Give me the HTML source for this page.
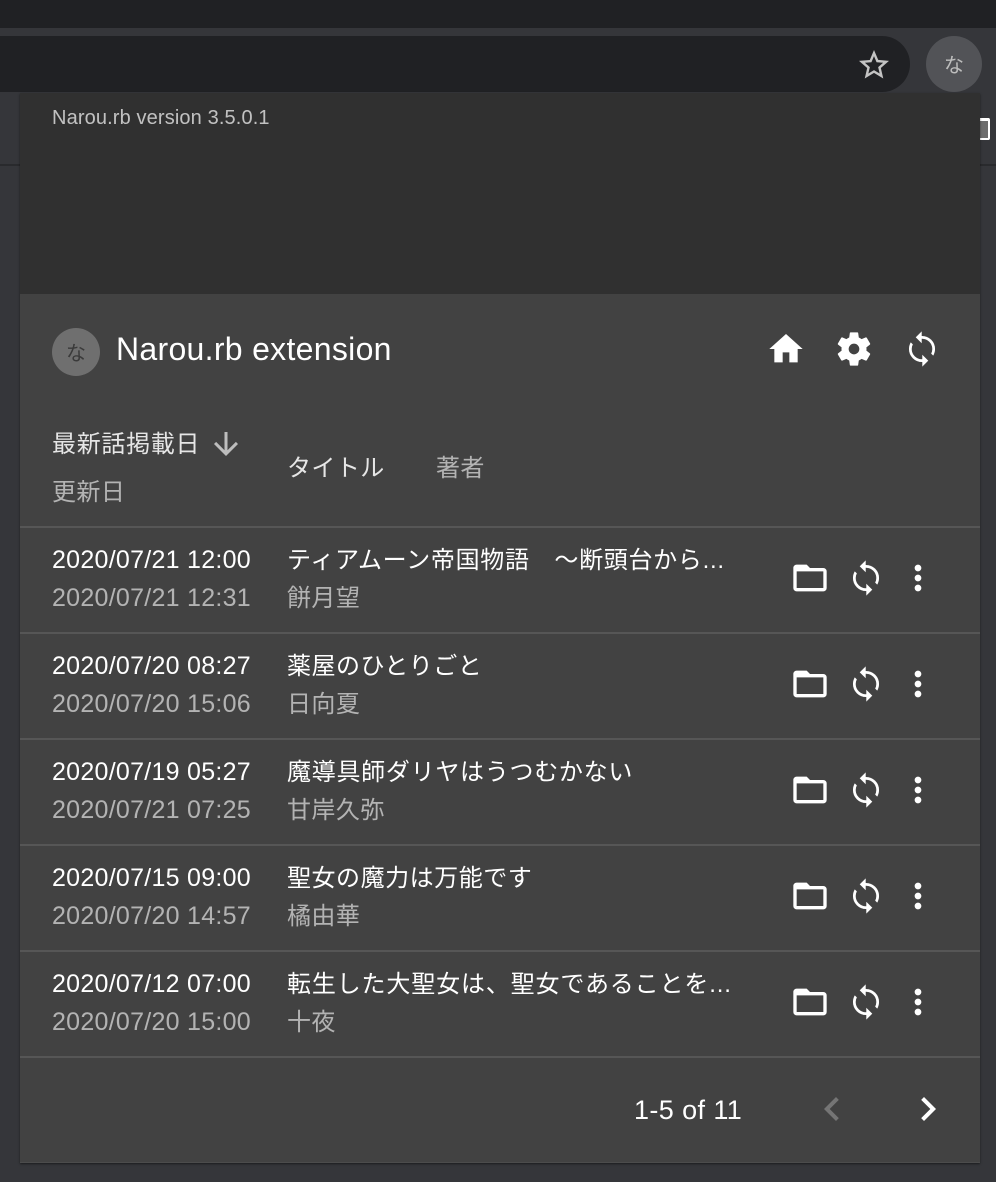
<!DOCTYPE html>
<html lang="ja"><head><meta charset="utf-8"><title>Narou.rb extension</title>
<style>
html,body{margin:0;padding:0;background:#35363a}
#p{position:relative;width:996px;height:1182px;overflow:hidden;background:#35363a;font-family:"Liberation Sans","Noto Sans CJK JP",sans-serif}
#p div,#p svg{position:absolute}
.t{white-space:nowrap;font-size:24px;line-height:32px;letter-spacing:.43px;color:#fff}
.d{font-size:25px;letter-spacing:.27px;margin-top:-1px}
.g{color:rgba(255,255,255,.6)}
.l{left:0;width:960px;height:2px;background:#565656}
svg{fill:#fff}
.s{stroke:#424242;stroke-width:.35}
</style></head><body><div id="p">
<div style="left:0;top:0;width:996px;height:28px;background:#202124"></div>
<div style="left:-40px;top:36px;width:950px;height:56px;border-radius:28px;background:#202124"></div>
<div style="left:926px;top:36px;width:56px;height:56px;border-radius:50%;background:#525357"></div>
<div class="t" style="left:926px;top:50px;width:56px;text-align:center;font-size:20px;letter-spacing:0;color:#bdbdbd">な</div>
<svg style="left:856px;top:47px;fill:#c4c4c4" width="36" height="36" viewBox="0 0 24 24"><path d="M22 9.24l-7.19-.62L12 2 9.19 8.63 2 9.24l5.46 4.73L5.82 21 12 17.27 18.18 21l-1.63-7.03L22 9.24zM12 15.4l-3.76 2.27 1-4.28-3.32-2.88 4.38-.38L12 6.1l1.71 4.04 4.38.38-3.32 2.88 1 4.28L12 15.4z"/></svg>
<div style="left:0;top:164px;width:996px;height:2px;background:#292a2d"></div>
<div style="left:976px;top:118px;width:12px;height:17px;border:2px solid #fff;border-left:0;border-radius:2px;background:#6d6d6d;border-top-width:3px"></div>

<div style="left:20px;top:93px;width:960px;height:1070px;background:#424242;box-shadow:0 1px 2px rgba(0,0,0,.5)">
<div style="left:0;top:0;width:960px;height:201px;background:#303030"></div>
<div class="t" style="left:32px;top:13px;font-size:20px;line-height:24px;letter-spacing:.13px;color:rgba(255,255,255,.7)">Narou.rb version 3.5.0.1</div>

<div style="left:32px;top:235px;width:48px;height:48px;border-radius:50%;background:#6f6f6f"></div>
<div class="t" style="left:32px;top:245px;width:48px;text-align:center;font-size:20px;letter-spacing:0;color:#3a3a3a">な</div>
<div class="t" style="left:96px;top:236px;font-size:32px;line-height:40px;letter-spacing:.3px">Narou.rb extension</div>

<svg style="left:746px;top:236px" width="40" height="40" viewBox="0 0 24 24"><path d="M10 20v-6h4v6h5v-8h3L12 3 2 12h3v8z"/></svg>
<svg style="left:814px;top:236px" width="40" height="40" viewBox="0 0 24 24"><path d="M12 15.2A3.2 3.2 0 0 1 8.8 12A3.2 3.2 0 0 1 12 8.8A3.2 3.2 0 0 1 15.2 12A3.2 3.2 0 0 1 12 15.2M19.43 12.97C19.47 12.65 19.5 12.33 19.5 12C19.5 11.67 19.47 11.34 19.43 11L21.54 9.37C21.73 9.22 21.78 8.95 21.66 8.73L19.66 5.27C19.54 5.05 19.27 4.96 19.05 5.05L16.56 6.05C16.04 5.66 15.5 5.32 14.87 5.07L14.5 2.42C14.46 2.18 14.25 2 14 2H10C9.75 2 9.54 2.18 9.5 2.42L9.13 5.07C8.5 5.32 7.96 5.66 7.44 6.05L4.95 5.05C4.73 4.96 4.46 5.05 4.34 5.27L2.34 8.73C2.21 8.95 2.27 9.22 2.46 9.37L4.57 11C4.53 11.34 4.5 11.67 4.5 12C4.5 12.33 4.53 12.65 4.57 12.97L2.46 14.63C2.27 14.78 2.21 15.05 2.34 15.27L4.34 18.73C4.46 18.95 4.73 19.03 4.95 18.95L7.44 17.94C7.96 18.34 8.5 18.68 9.13 18.93L9.5 21.58C9.54 21.82 9.75 22 10 22H14C14.25 22 14.46 21.82 14.5 21.58L14.87 18.93C15.5 18.67 16.04 18.34 16.56 17.94L19.05 18.95C19.27 19.03 19.54 18.95 19.66 18.73L21.66 15.27C21.78 15.05 21.73 14.78 21.54 14.63L19.43 12.97Z"/></svg>
<svg style="left:882px;top:236px" width="40" height="40" viewBox="0 0 24 24"><path class="s" d="M12 4V1L8 5l4 4V6c3.31 0 6 2.69 6 6 0 1.01-.25 1.97-.7 2.8l1.46 1.46C19.54 15.03 20 13.57 20 12c0-4.42-3.58-8-8-8zm0 14c-3.31 0-6-2.69-6-6 0-1.01.25-1.97.7-2.8L5.24 7.74C4.46 8.97 4 10.43 4 12c0 4.42 3.58 8 8 8v3l4-4-4-4v3z"/></svg>

<div class="t" style="left:32px;top:336px;letter-spacing:.7px;color:rgba(255,255,255,.87)">最新話掲載日</div>
<svg style="left:188px;top:333px;fill:#bdbdbd" width="36" height="36" viewBox="0 0 24 24"><path d="M20 12l-1.41-1.41L13 16.17V4h-2v12.17l-5.58-5.59L4 12l8 8 8-8z"/></svg>
<div class="t g" style="left:32px;top:384px">更新日</div>
<div class="t" style="left:267px;top:360px;color:rgba(255,255,255,.87)">タイトル</div>
<div class="t g" style="left:416px;top:360px">著者</div>

<div class="l" style="top:433px"></div>
<div class="l" style="top:539px"></div>
<div class="l" style="top:645px"></div>
<div class="l" style="top:751px"></div>
<div class="l" style="top:857px"></div>
<div class="l" style="top:963px"></div>

<div class="t d" style="left:32px;top:452px">2020/07/21 12:00</div>
<div class="t d g" style="left:32px;top:490px">2020/07/21 12:31</div>
<div class="t" style="left:267px;top:452px;letter-spacing:.7px">ティアムーン帝国物語　〜断頭台から...</div>
<div class="t g" style="left:267px;top:490px">餅月望</div>

<div class="t d" style="left:32px;top:558px">2020/07/20 08:27</div>
<div class="t d g" style="left:32px;top:596px">2020/07/20 15:06</div>
<div class="t" style="left:267px;top:558px;letter-spacing:.5px">薬屋のひとりごと</div>
<div class="t g" style="left:267px;top:596px">日向夏</div>

<div class="t d" style="left:32px;top:664px">2020/07/19 05:27</div>
<div class="t d g" style="left:32px;top:702px">2020/07/21 07:25</div>
<div class="t" style="left:267px;top:664px;letter-spacing:.72px">魔導具師ダリヤはうつむかない</div>
<div class="t g" style="left:267px;top:702px">甘岸久弥</div>

<div class="t d" style="left:32px;top:770px">2020/07/15 09:00</div>
<div class="t d g" style="left:32px;top:808px">2020/07/20 14:57</div>
<div class="t" style="left:267px;top:770px;letter-spacing:.53px">聖女の魔力は万能です</div>
<div class="t g" style="left:267px;top:808px">橘由華</div>

<div class="t d" style="left:32px;top:876px">2020/07/12 07:00</div>
<div class="t d g" style="left:32px;top:914px">2020/07/20 15:00</div>
<div class="t" style="left:267px;top:876px;letter-spacing:.85px">転生した大聖女は、聖女であることを...</div>
<div class="t g" style="left:267px;top:914px">十夜</div>

<svg style="left:770px;top:465px" width="40" height="40" viewBox="0 0 24 24"><path d="M20 18H4V8H20M20 6H12L10 4H4C2.89 4 2 4.89 2 6V18A2 2 0 0 0 4 20H20A2 2 0 0 0 22 18V8C22 6.89 21.1 6 20 6Z"/></svg>
<svg style="left:826px;top:465px" width="40" height="40" viewBox="0 0 24 24"><path class="s" d="M12 4V1L8 5l4 4V6c3.31 0 6 2.69 6 6 0 1.01-.25 1.97-.7 2.8l1.46 1.46C19.54 15.03 20 13.57 20 12c0-4.42-3.58-8-8-8zm0 14c-3.31 0-6-2.69-6-6 0-1.01.25-1.97.7-2.8L5.24 7.74C4.46 8.97 4 10.43 4 12c0 4.42 3.58 8 8 8v3l4-4-4-4v3z"/></svg>
<svg style="left:878px;top:465px" width="40" height="40" viewBox="0 0 24 24"><path d="M12 8c1.1 0 2-.9 2-2s-.9-2-2-2-2 .9-2 2 .9 2 2 2zm0 2c-1.1 0-2 .9-2 2s.9 2 2 2 2-.9 2-2-.9-2-2-2zm0 6c-1.1 0-2 .9-2 2s.9 2 2 2 2-.9 2-2-.9-2-2-2z"/></svg>

<svg style="left:770px;top:571px" width="40" height="40" viewBox="0 0 24 24"><path d="M20 18H4V8H20M20 6H12L10 4H4C2.89 4 2 4.89 2 6V18A2 2 0 0 0 4 20H20A2 2 0 0 0 22 18V8C22 6.89 21.1 6 20 6Z"/></svg>
<svg style="left:826px;top:571px" width="40" height="40" viewBox="0 0 24 24"><path class="s" d="M12 4V1L8 5l4 4V6c3.31 0 6 2.69 6 6 0 1.01-.25 1.97-.7 2.8l1.46 1.46C19.54 15.03 20 13.57 20 12c0-4.42-3.58-8-8-8zm0 14c-3.31 0-6-2.69-6-6 0-1.01.25-1.97.7-2.8L5.24 7.74C4.46 8.97 4 10.43 4 12c0 4.42 3.58 8 8 8v3l4-4-4-4v3z"/></svg>
<svg style="left:878px;top:571px" width="40" height="40" viewBox="0 0 24 24"><path d="M12 8c1.1 0 2-.9 2-2s-.9-2-2-2-2 .9-2 2 .9 2 2 2zm0 2c-1.1 0-2 .9-2 2s.9 2 2 2 2-.9 2-2-.9-2-2-2zm0 6c-1.1 0-2 .9-2 2s.9 2 2 2 2-.9 2-2-.9-2-2-2z"/></svg>

<svg style="left:770px;top:677px" width="40" height="40" viewBox="0 0 24 24"><path d="M20 18H4V8H20M20 6H12L10 4H4C2.89 4 2 4.89 2 6V18A2 2 0 0 0 4 20H20A2 2 0 0 0 22 18V8C22 6.89 21.1 6 20 6Z"/></svg>
<svg style="left:826px;top:677px" width="40" height="40" viewBox="0 0 24 24"><path class="s" d="M12 4V1L8 5l4 4V6c3.31 0 6 2.69 6 6 0 1.01-.25 1.97-.7 2.8l1.46 1.46C19.54 15.03 20 13.57 20 12c0-4.42-3.58-8-8-8zm0 14c-3.31 0-6-2.69-6-6 0-1.01.25-1.97.7-2.8L5.24 7.74C4.46 8.97 4 10.43 4 12c0 4.42 3.58 8 8 8v3l4-4-4-4v3z"/></svg>
<svg style="left:878px;top:677px" width="40" height="40" viewBox="0 0 24 24"><path d="M12 8c1.1 0 2-.9 2-2s-.9-2-2-2-2 .9-2 2 .9 2 2 2zm0 2c-1.1 0-2 .9-2 2s.9 2 2 2 2-.9 2-2-.9-2-2-2zm0 6c-1.1 0-2 .9-2 2s.9 2 2 2 2-.9 2-2-.9-2-2-2z"/></svg>

<svg style="left:770px;top:783px" width="40" height="40" viewBox="0 0 24 24"><path d="M20 18H4V8H20M20 6H12L10 4H4C2.89 4 2 4.89 2 6V18A2 2 0 0 0 4 20H20A2 2 0 0 0 22 18V8C22 6.89 21.1 6 20 6Z"/></svg>
<svg style="left:826px;top:783px" width="40" height="40" viewBox="0 0 24 24"><path class="s" d="M12 4V1L8 5l4 4V6c3.31 0 6 2.69 6 6 0 1.01-.25 1.97-.7 2.8l1.46 1.46C19.54 15.03 20 13.57 20 12c0-4.42-3.58-8-8-8zm0 14c-3.31 0-6-2.69-6-6 0-1.01.25-1.97.7-2.8L5.24 7.74C4.46 8.97 4 10.43 4 12c0 4.42 3.58 8 8 8v3l4-4-4-4v3z"/></svg>
<svg style="left:878px;top:783px" width="40" height="40" viewBox="0 0 24 24"><path d="M12 8c1.1 0 2-.9 2-2s-.9-2-2-2-2 .9-2 2 .9 2 2 2zm0 2c-1.1 0-2 .9-2 2s.9 2 2 2 2-.9 2-2-.9-2-2-2zm0 6c-1.1 0-2 .9-2 2s.9 2 2 2 2-.9 2-2-.9-2-2-2z"/></svg>

<svg style="left:770px;top:889px" width="40" height="40" viewBox="0 0 24 24"><path d="M20 18H4V8H20M20 6H12L10 4H4C2.89 4 2 4.89 2 6V18A2 2 0 0 0 4 20H20A2 2 0 0 0 22 18V8C22 6.89 21.1 6 20 6Z"/></svg>
<svg style="left:826px;top:889px" width="40" height="40" viewBox="0 0 24 24"><path class="s" d="M12 4V1L8 5l4 4V6c3.31 0 6 2.69 6 6 0 1.01-.25 1.97-.7 2.8l1.46 1.46C19.54 15.03 20 13.57 20 12c0-4.42-3.58-8-8-8zm0 14c-3.31 0-6-2.69-6-6 0-1.01.25-1.97.7-2.8L5.24 7.74C4.46 8.97 4 10.43 4 12c0 4.42 3.58 8 8 8v3l4-4-4-4v3z"/></svg>
<svg style="left:878px;top:889px" width="40" height="40" viewBox="0 0 24 24"><path d="M12 8c1.1 0 2-.9 2-2s-.9-2-2-2-2 .9-2 2 .9 2 2 2zm0 2c-1.1 0-2 .9-2 2s.9 2 2 2 2-.9 2-2-.9-2-2-2zm0 6c-1.1 0-2 .9-2 2s.9 2 2 2 2-.9 2-2-.9-2-2-2z"/></svg>

<div class="t" style="left:614px;top:1001px;font-size:27px;letter-spacing:.4px">1-5 of 11</div>
<svg style="left:788px;top:992px;fill:#757575" width="48" height="48" viewBox="0 0 24 24"><path d="M15.41 7.41L14 6l-6 6 6 6 1.41-1.41L10.83 12z"/></svg>
<svg style="left:884px;top:992px" width="48" height="48" viewBox="0 0 24 24"><path d="M8.59 16.59L10 18l6-6-6-6-1.41 1.41L13.17 12z"/></svg>
<div style="left:0;top:1069px;width:960px;height:1px;background:#4c4c4c"></div>
</div>
</div></body></html>
